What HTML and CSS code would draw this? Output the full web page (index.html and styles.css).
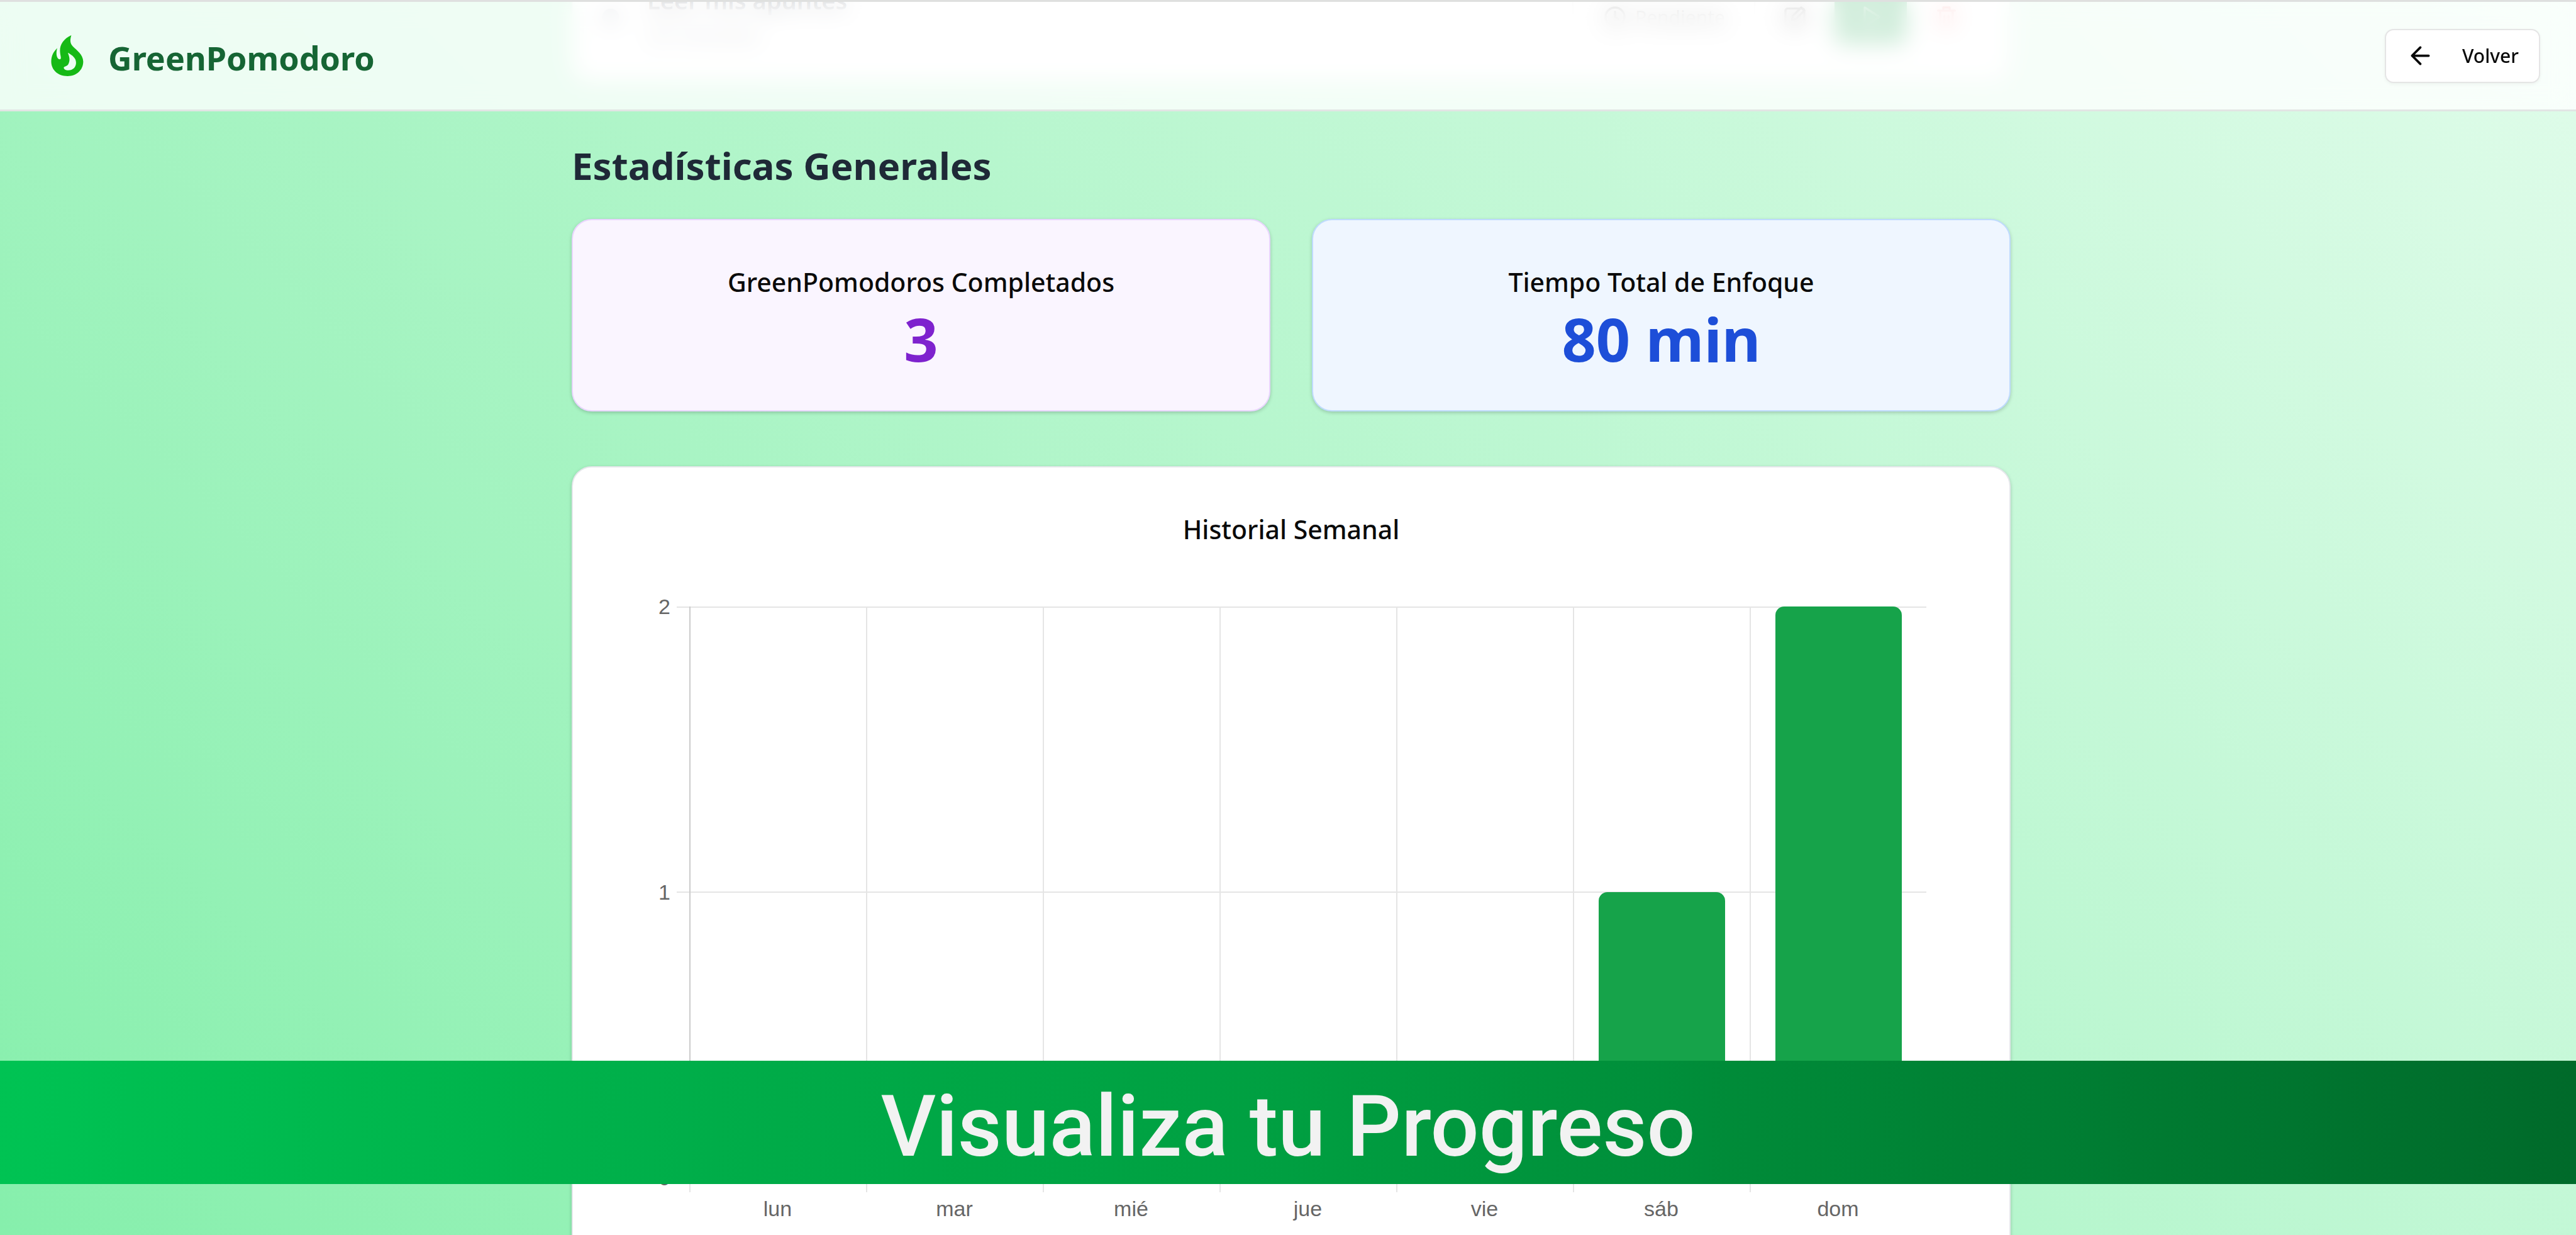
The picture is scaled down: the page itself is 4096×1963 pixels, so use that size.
FILE: index.html
```
<!DOCTYPE html>
<html lang="es">
<head>
<meta charset="utf-8">
<meta name="viewport" content="width=device-width, initial-scale=1">
<title>GreenPomodoro</title>
<link rel="stylesheet" href="styles.css">
</head>
<body>
<header class="topbar">
  <div class="brand">
    <svg class="brand-icon" viewBox="0 0 55 70" aria-hidden="true">
      <path fill-rule="evenodd" d="M34.4 0C32 8 32 14 37 19C43 25 54.8 33 54.8 45C54.8 59 44 70 28 70C11 70 0 59 0 45C0 35 4 28 10.2 22C8.500 28 8.500 35 11 39C12.500 41.500 15.500 42 16.400 39.500C17 37 15 33 15 26C15 16 21 6 34.400 0ZM28.500 30C31 37 33 43 29 50C27 53.500 21 53 21.500 56C22 58.500 25 60 29 60C37 60 42.500 54.500 42.500 47C42.500 39 36 34.500 28.500 30Z"/>
    </svg>
    <span class="brand-name">GreenPomodoro</span>
  </div>
  <button class="back" type="button">
    <svg class="back-icon" viewBox="0 0 24 24" aria-hidden="true"><path d="m12 19-7-7 7-7M19 12H5"/></svg>
    Volver
  </button>
</header>

<main class="page">
  <section class="task">
    <svg class="task-dot" viewBox="0 0 24 24" aria-hidden="true"><circle cx="12" cy="12" r="8"/></svg>
    <div class="task-text">
      <p class="task-name">Leer mis apuntes</p>
      <p class="task-time">25 minutos</p>
    </div>
    <div class="task-actions">
      <button class="pill" type="button">
        <svg class="icon" viewBox="0 0 24 24" aria-hidden="true"><circle cx="12" cy="12" r="9"/><path d="M12 7v5l3 2"/></svg>
        Pendiente
      </button>
      <button class="tool" type="button" aria-label="Editar">
        <svg class="icon" viewBox="0 0 24 24" aria-hidden="true"><rect x="3" y="4" width="18" height="17" rx="2"/><path d="M9 15l1-4 8-8 3 3-8 8z"/></svg>
      </button>
      <button class="tool start" type="button" aria-label="Iniciar">
        <svg class="icon" viewBox="0 0 24 24" aria-hidden="true"><path d="M6 3l14 9-14 9z"/></svg>
      </button>
      <button class="tool remove" type="button" aria-label="Eliminar">
        <svg class="icon" viewBox="0 0 24 24" aria-hidden="true"><path d="M4 6h16M6 6v15h12V6M9 6V3h6v3M10 11v6M14 11v6"/></svg>
      </button>
    </div>
  </section>

  <h1 class="heading">Estadísticas Generales</h1>

  <section class="stats">
    <article class="card stat stat-count">
      <h2 class="card-title">GreenPomodoros Completados</h2>
      <p class="stat-value">3</p>
    </article>
    <article class="card stat stat-time">
      <h2 class="card-title">Tiempo Total de Enfoque</h2>
      <p class="stat-value">80 min</p>
    </article>
  </section>

  <section class="card history">
    <h2 class="card-title">Historial Semanal</h2>
    <div class="chart">
      <div class="scale"><span>2</span><span>1</span><span>0</span></div>
      <div class="lines"><i></i><i></i></div>
      <div class="bars">
        <div class="slot"></div>
        <div class="slot"></div>
        <div class="slot"></div>
        <div class="slot"></div>
        <div class="slot"></div>
        <div class="slot"><div class="bar" style="height:50%"></div></div>
        <div class="slot"><div class="bar" style="height:100%"></div></div>
      </div>
      <div class="ticks"><i></i><i></i><i></i><i></i><i></i><i></i><i></i></div>
      <div class="days"><span>lun</span><span>mar</span><span>mié</span><span>jue</span><span>vie</span><span>sáb</span><span>dom</span></div>
    </div>
  </section>
</main>

<div class="banner">Visualiza tu Progreso</div>
</body>
</html>
```
FILE: styles.css
```
* { box-sizing: border-box; }

body {
  margin: 0;
  height: 100vh;
  overflow: hidden;
  font-family: "Noto Sans", "Open Sans", sans-serif;
  color: #0a0a0a;
  background: linear-gradient(45deg, #86efac, #e0fcea);
}

h1, h2, p { margin: 0; }
button { font: inherit; color: inherit; cursor: pointer; }

/* Top bar */
.topbar {
  position: fixed;
  inset: 0 0 auto 0;
  z-index: 2;
  display: flex;
  align-items: center;
  justify-content: space-between;
  height: 177px;
  padding: 0 57px;
  border-top: 3px solid #dfe0df;
  border-bottom: 3px solid #e2e5e4;
  background: rgba(255, 255, 255, 0.8);
  backdrop-filter: blur(18px);
}
.brand { display: flex; align-items: center; gap: 15px; }
.brand-icon { width: 100px; height: 65px; fill: #16b916; }
.brand-name {
  padding-top: 6px;
  font-size: 52px;
  line-height: 60px;
  font-weight: 700;
  color: #166534;
}
.back {
  display: flex;
  align-items: center;
  gap: 44px;
  height: 86px;
  padding: 0 32px;
  border: 2px solid #e5e5e5;
  border-radius: 14px;
  background: #fff;
  box-shadow: 0 2px 5px rgba(0, 0, 0, 0.05);
  font-size: 30px;
  font-weight: 500;
}
.back-icon, .icon {
  fill: none;
  stroke: currentColor;
  stroke-width: 2;
  stroke-linecap: round;
  stroke-linejoin: round;
}
.back-icon { width: 45px; height: 45px; }
.icon { width: 40px; height: 40px; }

/* Page column */
.page {
  max-width: 2298px;
  margin: 0 auto;
  padding-left: 10px;
}

/* Task row */
.task {
  display: flex;
  align-items: center;
  gap: 38px;
  height: 206px;
  margin-top: -76px;
  padding: 0 57px 0 40px;
  border: 2px solid #e5e7eb;
  border-radius: 30px;
  background: #fff;
  box-shadow: 0 2px 7px rgba(0, 0, 0, 0.1);
}
.task-dot { width: 40px; height: 40px; fill: #9ca3af; }
.task-text { flex: 1; }
.task-name { font-size: 38px; line-height: 48px; font-weight: 600; color: #1f2937; }
.task-time { margin-top: 8px; font-size: 34px; line-height: 46px; color: #6b7280; }
.task-actions { display: flex; align-items: center; gap: 20px; }
.pill, .tool {
  display: flex;
  align-items: center;
  justify-content: center;
  gap: 12px;
  height: 86px;
  width: 86px;
  padding: 0;
  border: 0;
  border-radius: 14px;
  background: none;
  font-size: 30px;
}
.pill { width: auto; padding: 0 46px; border: 2px solid #e5e5e5; }
.start { width: 115px; background: #16a34a; color: #fff; }
.remove { color: #ef4444; }

.heading {
  margin: 97px 0 49px;
  font-size: 60px;
  line-height: 72px;
  font-weight: 700;
  color: #1f2937;
}

/* Cards */
.card {
  padding: 68px 0;
  border: 2px solid #e5e7eb;
  border-radius: 32px;
  background: #fff;
  box-shadow: 0 2px 7px rgba(0, 0, 0, 0.1), 0 2px 5px rgba(0, 0, 0, 0.1);
  text-align: center;
}
.card-title { font-size: 41px; line-height: 60px; font-weight: 500; }
.stats {
  display: grid;
  grid-template-columns: 1fr 1fr;
  gap: 66px;
  margin-bottom: 87px;
}
.stat { padding-bottom: 66px; }
.stat-value { margin-top: 12px; font-size: 95px; line-height: 96px; font-weight: 700; }
.stat-count { border-color: #e9d5ff; background: #faf5ff; }
.stat-count .stat-value { color: #7e22ce; }
.stat-time { border-color: #bfdbfe; background: #eff6ff; }
.stat-time .stat-value { color: #1d4ed8; }

/* Weekly chart */
.chart {
  display: grid;
  grid-template-columns: 165px 20px 1fr;
  grid-template-rows: 908px 23px auto;
  margin-top: 93px;
  padding-right: 132px;
  font-family: "Liberation Sans", Arial, sans-serif;
  font-size: 34px;
  line-height: 40px;
  color: #666;
}
.scale {
  grid-area: 1 / 1;
  display: flex;
  flex-direction: column;
  justify-content: space-between;
  margin: -20px 0;
  padding-right: 10px;
  text-align: right;
}
.lines {
  grid-area: 1 / 2 / 2 / 4;
  display: grid;
  grid-template-rows: 1fr 1fr;
  border-bottom: 2px solid #e5e5e5;
}
.lines i { border-top: 2px solid #e5e5e5; }
.bars, .ticks, .days { display: grid; grid-template-columns: repeat(7, 1fr); }
.bars { grid-area: 1 / 3; }
.slot {
  display: flex;
  align-items: flex-end;
  justify-content: center;
  border-left: 2px solid #e5e5e5;
}
.slot:first-child { border-color: #ccc; }
.bar { width: 72%; border-radius: 14px 14px 0 0; background: #16a34a; }
.ticks { grid-area: 2 / 3; }
.ticks i { border-left: 2px solid #e5e5e5; }
.days { grid-area: 3 / 3; padding-top: 6px; }

/* Caption band */
.banner {
  position: fixed;
  inset: auto 0 81px 0;
  z-index: 3;
  height: 196px;
  padding-top: 25px;
  background: linear-gradient(92deg, #00c353, #00a947 33%, #009f41 50%, #008a38 68%, #006a2a);
  color: #f2f2f2;
  font-family: Roboto, sans-serif;
  font-size: 136px;
  line-height: 160px;
  font-weight: 500;
  text-align: center;
}
```
